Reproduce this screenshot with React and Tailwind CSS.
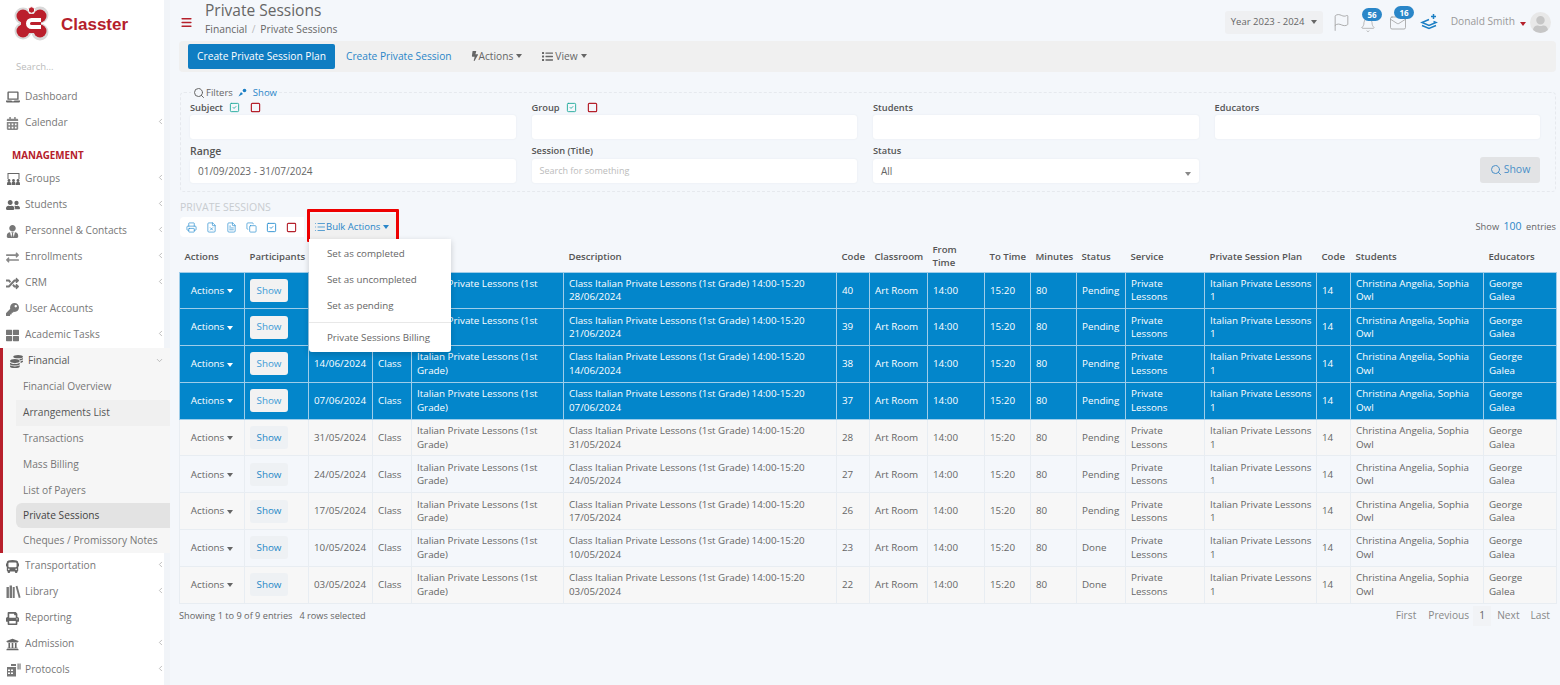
import {
  Bell,
  ChevronDown,
  ChevronLeft,
  Copy,
  FileText,
  FileX,
  Flag,
  List,
  Mail,
  Menu,
  Printer,
  Search,
  Square,
  SquareCheck,
} from "lucide-react";
import {
  FaBolt,
  FaBus,
  FaCalendarAlt,
  FaCoins,
  FaExchangeAlt,
  FaKey,
  FaLaptop,
  FaList,
  FaPrint,
  FaRandom,
  FaThLarge,
  FaUniversity,
  FaUserFriends,
  FaUserTie,
  FaUser,
} from "react-icons/fa";

function GroupsIcon() {
  return (
    <svg width="15" height="14" viewBox="0 0 15 14" fill="#666">
      <path d="M1.5 1h12v6h-1V2h-10v5h-1z" />
      <circle cx="3" cy="8.5" r="1.4" />
      <circle cx="7.5" cy="8.5" r="1.4" />
      <circle cx="12" cy="8.5" r="1.4" />
      <path d="M1 13v-1.5a2 2 0 0 1 4 0V13zM5.5 13v-1.5a2 2 0 0 1 4 0V13zM10 13v-1.5a2 2 0 0 1 4 0V13z" />
    </svg>
  );
}

function LibraryIcon() {
  return (
    <svg width="15" height="14" viewBox="0 0 15 14" fill="#777">
      <rect x="0.5" y="2" width="2.4" height="11" />
      <rect x="3.6" y="0.5" width="2.4" height="12.5" />
      <rect x="6.7" y="2" width="2" height="11" />
      <path d="M9.6 1.2l1.8-.5 3.2 11.8-1.8.5z" />
    </svg>
  );
}

function ProtocolsIcon() {
  return (
    <svg width="15" height="14" viewBox="0 0 15 14" fill="#777">
      <path d="M1 4h9v9.5H1zM2 6.5v1.6h2V6.5zm3 0v1.6h2V6.5zm-3 3v1.6h2V9.5zm3 0v1.6h2V9.5z" fillRule="evenodd" />
      <rect x="11.5" y="0.5" width="1.2" height="6" />
      <rect x="13.4" y="0.5" width="1.2" height="6" />
      <rect x="5" y="1" width="5" height="2" />
    </svg>
  );
}

const topItems = [
  { label: "Dashboard", icon: <FaLaptop size={14} /> },
  { label: "Calendar", icon: <FaCalendarAlt size={13} className="text-[#888]" />, arrow: true },
];

const managementItems = [
  { label: "Groups", icon: <GroupsIcon />, arrow: true },
  { label: "Students", icon: <FaUserFriends size={14} />, arrow: true },
  { label: "Personnel & Contacts", icon: <FaUserTie size={13} className="text-[#777]" />, arrow: true },
  { label: "Enrollments", icon: <FaExchangeAlt size={13} className="text-[#888]" />, arrow: true },
  { label: "CRM", icon: <FaRandom size={13} className="text-[#777]" />, arrow: true },
  { label: "User Accounts", icon: <FaKey size={13} className="text-[#777]" /> },
  { label: "Academic Tasks", icon: <FaThLarge size={13} className="text-[#777]" />, arrow: true },
];

const bottomItems = [
  { label: "Transportation", icon: <FaBus size={13} />, arrow: true },
  { label: "Library", icon: <LibraryIcon />, arrow: true },
  { label: "Reporting", icon: <FaPrint size={13} /> },
  { label: "Admission", icon: <FaUniversity size={13} />, arrow: true },
  { label: "Protocols", icon: <ProtocolsIcon />, arrow: true },
];

const financialLinks = [
  { label: "Financial Overview", h: "h-[26px]" },
  { label: "Arrangements List", h: "h-[26px]", tone: "bg-[#f0f0f0] text-[#555]" },
  { label: "Transactions", h: "h-[26px]" },
  { label: "Mass Billing", h: "h-[26px]" },
  { label: "List of Payers", h: "h-[25px]" },
  { label: "Private Sessions", h: "h-[25px]", tone: "bg-[#e3e3e3] text-[#444] rounded-l-md" },
  { label: "Cheques / Promissory Notes", h: "h-[25px]" },
];

const columns = [
  { label: "Actions", w: "w-[65px]" },
  { label: "Participants", w: "w-[64px]" },
  { label: "Date", w: "w-[64px]" },
  { label: "Type", w: "w-[39px]" },
  { label: "Title", w: "w-[152px]" },
  { label: "Description", w: "w-[273px]" },
  { label: "Code", w: "w-[33px]" },
  { label: "Classroom", w: "w-[58px]" },
  { label: "From Time", w: "w-[57px]" },
  { label: "To Time", w: "w-[46px]", nowrap: true },
  { label: "Minutes", w: "w-[46px]" },
  { label: "Status", w: "w-[49px]" },
  { label: "Service", w: "w-[79px]" },
  { label: "Private Session Plan", w: "w-[112px]" },
  { label: "Code", w: "w-[34px]" },
  { label: "Students", w: "w-[133px]" },
  { label: "Educators", w: "w-[73px]" },
];

const rows = [
  { date: "28/06/2024", code: 40, status: "Pending", selected: true },
  { date: "21/06/2024", code: 39, status: "Pending", selected: true },
  { date: "14/06/2024", code: 38, status: "Pending", selected: true },
  { date: "07/06/2024", code: 37, status: "Pending", selected: true },
  { date: "31/05/2024", code: 28, status: "Pending" },
  { date: "24/05/2024", code: 27, status: "Pending" },
  { date: "17/05/2024", code: 26, status: "Pending" },
  { date: "10/05/2024", code: 23, status: "Done" },
  { date: "03/05/2024", code: 22, status: "Done" },
];

function Caret() {
  return (
    <span className="ml-[3px] inline-block h-0 w-0 border-x-[3px] border-t-[4px] border-x-transparent border-t-current align-middle" />
  );
}

function Logo() {
  return (
    <svg width="36" height="38" viewBox="0 0 36 38" className="shrink-0">
      <g fill="#d9d9d9">
        <circle cx="9" cy="12" r="8.5" />
        <circle cx="26" cy="11" r="8.5" />
        <circle cx="9" cy="27" r="8.5" />
        <circle cx="26" cy="28" r="8.5" />
        <rect x="9" y="8" width="17" height="22" />
      </g>
      <g fill="#bb1f2c">
        <circle cx="9" cy="12" r="6.5" />
        <circle cx="26" cy="12" r="6.5" />
        <circle cx="9" cy="27" r="6.5" />
        <circle cx="26" cy="27" r="6.5" />
        <rect x="7" y="10" width="20" height="19" />
      </g>
      <path d="M27 16H17.5a3.5 3.5 0 0 0 0 7H27" fill="none" stroke="#fff" strokeWidth="4" />
      <circle cx="17.5" cy="6" r="3.2" fill="#bb1f2c" stroke="#fff" strokeWidth="1" />
    </svg>
  );
}

function NavRow({ item }) {
  return (
    <div className="mr-[6px] flex h-[26px] items-center bg-white pl-[6px] text-[10.2px] text-[#777]">
      <span className="flex w-[19px] shrink-0 text-[#666]">{item.icon}</span>
      <span className="flex-1 truncate">{item.label}</span>
      {item.arrow && <ChevronLeft size={9} className="-mr-[1px] -mt-[4px] text-[#aaa]" />}
    </div>
  );
}

function Sidebar() {
  return (
    <aside className="flex h-[685px] w-[170px] shrink-0 flex-col overflow-hidden bg-[#f1f4f8]">
      <div className="mr-[6px] flex h-[56px] items-start bg-white pl-[14px] pt-[4px]">
        <Logo />
        <span className="ml-[11px] mt-[11px] font-['Liberation_Sans',sans-serif] text-[17px] font-bold leading-[20px] text-[#b5202b]">
          Classter
        </span>
      </div>
      <div className="mr-[6px] flex h-[28px] items-start bg-white pl-[16px] pt-[4px] text-[9.5px] leading-[14px] text-[#bbb]">
        Search...
      </div>
      {topItems.map((item) => (
        <NavRow key={item.label} item={item} />
      ))}
      <div className="mr-[6px] flex h-[30px] items-end bg-white pb-[3px] pl-[12px] text-[9.8px] font-bold leading-[14px] text-[#b5202b]">
        MANAGEMENT
      </div>
      {managementItems.map((item) => (
        <NavRow key={item.label} item={item} />
      ))}
      <div className="border-l-[3px] border-[#b8202c] bg-[#f6f6f6]">
        <div className="flex h-[26px] items-center pl-[7px] pr-[6px] text-[10.2px] text-[#555]">
          <span className="flex w-[18px] shrink-0 text-[#666]">
            <FaCoins size={13} />
          </span>
          <span className="flex-1">Financial</span>
          <ChevronDown size={9} className="-mt-[2px] text-[#aaa]" />
        </div>
        {financialLinks.map((link) => (
          <div key={link.label} className={`${link.h} ml-[13px] flex items-center pl-[7px] text-[10.2px] ${link.tone || "text-[#777]"}`}>
            {link.label}
          </div>
        ))}
      </div>
      {bottomItems.map((item) => (
        <NavRow key={item.label} item={item} />
      ))}
      <div className="mr-[6px] flex-1 bg-white" />
    </aside>
  );
}

function TopBar() {
  return (
    <header className="flex h-[41px] items-start">
      <Menu size={13} strokeWidth={3} className="ml-[1px] mt-[16px] text-[#b5202b]" />
      <div className="ml-[12px]">
        <h1 className="text-[15.5px] leading-[20px] text-[#666]">Private Sessions</h1>
        <div className="text-[10.3px] leading-[18px] text-[#666]">
          Financial <span className="mx-[2px] text-[#bbb]">/</span> Private Sessions
        </div>
      </div>
      <div className="ml-auto mr-[5px] flex items-center pt-[10px]">
        <div className="flex h-[23px] w-[98px] items-center justify-center rounded-[3px] bg-[#eff0f2] text-[9.5px] text-[#666]">
          Year 2023 - 2024
          <span className="ml-[3px]"><Caret /></span>
        </div>
        <Flag size={19} strokeWidth={1} className="ml-[9px] text-[#999]" />
        <div className="relative ml-[9px] mt-[5px]">
          <Bell size={16} strokeWidth={1} className="text-[#999]" />
          <span className="absolute -right-[6px] -top-[9px] rounded-full bg-[#2a86c8] px-[5px] text-[8px] font-bold leading-[13px] text-white">56</span>
        </div>
        <div className="relative ml-[13px] mt-[2px]">
          <Mail size={18} strokeWidth={1} className="text-[#999]" />
          <span className="absolute -right-[7px] -top-[8px] rounded-full bg-[#2a86c8] px-[5px] text-[8px] font-bold leading-[13px] text-white">16</span>
        </div>
        <svg width="18" height="18" viewBox="0 0 18 18" fill="none" stroke="#1b7fc4" strokeWidth="1.5" className="ml-[13px]">
          <path d="M9 6.5 2 9.5l7 3 7-3-2.5-1" />
          <path d="M2 12.5l7 3 7-3" />
          <path d="M13.5 1v5M11 3.5h5" />
        </svg>
        <span className="ml-[13px] text-[10.2px] text-[#999]">Donald Smith</span>
        <span className="ml-[2px] text-[#b5202b]"><Caret /></span>
        <span className="ml-[4px] flex h-[21px] w-[21px] items-end justify-center overflow-hidden rounded-full bg-[#e8e8e8] text-[#c6c6c6]">
          <FaUser size={17} />
        </span>
      </div>
    </header>
  );
}

function ActionBar() {
  return (
    <div className="flex h-[31px] items-center rounded-[4px] bg-[#f0f0f0] pl-[9px] text-[10.2px]">
      <button className="h-[25px] w-[147px] rounded-[2px] bg-[#0f7dc2] text-white">Create Private Session Plan</button>
      <span className="ml-[11px] text-[#2a86c8]">Create Private Session</span>
      <span className="ml-[18px] flex items-center text-[#666]">
        <FaBolt size={10} className="-mr-[1px]" />
        Actions
        <Caret />
      </span>
      <span className="ml-[20px] flex items-center text-[#666]">
        <FaList size={11} className="mr-[2px]" />
        View
        <Caret />
      </span>
    </div>
  );
}

function CheckIcons() {
  return (
    <span className="ml-[6px] flex items-center gap-[10px]">
      <SquareCheck size={11} strokeWidth={2} className="text-[#1fa99a]" />
      <Square size={11} strokeWidth={2.6} className="text-[#b5202b]" />
    </span>
  );
}

function Field({ label, big, tall, icons, value, placeholder, select }) {
  return (
    <div>
      <div className={`flex items-center font-semibold leading-[14px] text-[#555] ${tall ? "h-[17px]" : "h-[15px]"} ${big ? "text-[10.5px]" : "text-[9.3px]"}`}>
        {label}
        {icons && <CheckIcons />}
      </div>
      <div className={`flex h-[24px] items-center rounded-[3px] bg-white px-[8px] shadow-[0_0_2px_#e4e8ee] ${placeholder ? "text-[9px] text-[#bbb]" : "text-[10px] text-[#666]"}`}>
        <span className="flex-1">{value || placeholder}</span>
        {select && <span className="mt-[4px] text-[#888]"><Caret /></span>}
      </div>
    </div>
  );
}

function Filters() {
  return (
    <fieldset className="ml-[1px] mt-[14px] h-[106px] w-[1376px] rounded-[4px] border border-dashed border-[#e6e9ee] pl-[9px] pr-[15px]">
      <legend className="ml-[1px] flex items-center px-[2px] text-[9.5px] leading-[13px] text-[#666]">
        <Search size={12} className="mr-[1px]" />
        Filters
        <svg width="9" height="9" viewBox="0 0 9 9" className="ml-[5px] mr-[6px]">
          <path d="M0.5 8.5 3 4l2 2z" fill="#1b7fc4" />
          <circle cx="6.5" cy="2.5" r="1.8" fill="#1b7fc4" />
        </svg>
        <span className="text-[#2a86c8]">Show</span>
      </legend>
      <div className="mt-[1px] grid grid-cols-4 gap-x-[16px] gap-y-[3px]">
        <Field label="Subject" icons />
        <Field label="Group" icons />
        <Field label="Students" />
        <Field label="Educators" />
        <Field label="Range" big tall value="01/09/2023 - 31/07/2024" />
        <Field label="Session (Title)" tall placeholder="Search for something" />
        <Field label="Status" tall value="All" select />
        <div className="flex items-end justify-end">
          <button className="flex h-[26px] w-[60px] items-center justify-center rounded-[3px] bg-[#e2e3e5] text-[10.5px] text-[#4a90c8]">
            <Search size={12} className="mr-[2px]" />
            Show
          </button>
        </div>
      </div>
    </fieldset>
  );
}

function ExportBar() {
  return (
    <div className="relative mt-[1px] flex h-[24px] items-center">
      <div className="ml-[1px] flex h-[20px] w-[124px] items-center gap-[9px] rounded-l-[4px] bg-white pl-[6px] text-[#2a8fd0]">
        <Printer size={11} strokeWidth={1.5} />
        <FileX size={11} strokeWidth={1.5} />
        <FileText size={11} strokeWidth={1.5} />
        <Copy size={11} strokeWidth={1.5} />
        <SquareCheck size={11} strokeWidth={2} />
        <Square size={11} strokeWidth={2.4} className="text-[#b5202b]" />
      </div>
      <div className="relative ml-[5px] flex h-[26px] w-[88px] items-center bg-[#f0f0f0] pl-[5px] text-[9.5px] text-[#2a86c8]">
        <List size={12} strokeWidth={1.5} />
        Bulk Actions
        <Caret />
        <span className="absolute -inset-x-[2px] -bottom-[2px] -top-[5px] rounded-[1px] border-[3px] border-[#ee0000]" />
        <div className="absolute left-0 top-[25px] z-10 flex h-[113px] w-[142px] flex-col rounded-b-[3px] bg-white pl-[18px] pt-[2px] text-[9.75px] text-[#666] shadow-[0_2px_6px_rgba(0,0,0,0.18)]">
          <span className="flex h-[26px] items-center">Set as completed</span>
          <span className="flex h-[26px] items-center">Set as uncompleted</span>
          <span className="flex h-[26px] items-center">Set as pending</span>
          <span className="-ml-[18px] mt-[3px] border-t border-[#e8e8e8] pl-[18px] pt-[8px] leading-[14px]">Private Sessions Billing</span>
        </div>
      </div>
      <div className="ml-auto text-[9.3px] text-[#666]">
        Show <span className="mx-[2px] text-[10.5px] text-[#2a86c8]">100</span> entries
      </div>
    </div>
  );
}

function SessionsTable() {
  return (
    <table className="mt-[2px] w-[1377px] table-fixed border-collapse text-[9.8px] leading-[13.5px]">
      <colgroup>
        {columns.map((col, i) => (
          <col key={i} className={col.w} />
        ))}
      </colgroup>
      <thead>
        <tr className="h-[31px]">
          {columns.map((col, i) => (
            <th key={i} className={`px-[5px] text-left text-[9.6px] font-semibold leading-[13px] text-[#555] ${col.nowrap ? "whitespace-nowrap" : ""}`}>
              {col.label}
            </th>
          ))}
        </tr>
      </thead>
      <tbody>
        {rows.map((row, i) => {
          const cell = row.selected
            ? "border border-[#9fcde9] px-[5px]"
            : "border border-[#e8edf2] px-[5px]";
          const tone = row.selected
            ? "bg-[#0386cb] text-white"
            : i % 2 === 0
              ? "bg-[#f7f7f7] text-[#666]"
              : "bg-[#f4f7fb] text-[#666]";
          return (
            <tr key={row.code} className={`h-[36.8px] ${tone}`}>
              <td className={`${cell} text-center`}>
                Actions
                <Caret />
              </td>
              <td className={cell}>
                <span className={`flex h-[23px] w-[38px] items-center justify-center rounded-[3px] ${row.selected ? "bg-[#f2f2f2] text-[#3b9ad6]" : "bg-[#eef1f4] text-[#1e88c7]"}`}>
                  Show
                </span>
              </td>
              <td className={cell}>{row.date}</td>
              <td className={cell}>Class</td>
              <td className={cell}>Italian Private Lessons (1st Grade)</td>
              <td className={cell}>
                Class Italian Private Lessons (1st Grade) 14:00-15:20
                <br />
                {row.date}
              </td>
              <td className={cell}>{row.code}</td>
              <td className={cell}>Art Room</td>
              <td className={cell}>14:00</td>
              <td className={cell}>15:20</td>
              <td className={cell}>80</td>
              <td className={cell}>{row.status}</td>
              <td className={cell}>Private Lessons</td>
              <td className={`${cell} whitespace-nowrap`}>
                Italian Private Lessons
                <br />1
              </td>
              <td className={cell}>14</td>
              <td className={cell}>Christina Angelia, Sophia Owl</td>
              <td className={cell}>
                George
                <br />
                Galea
              </td>
            </tr>
          );
        })}
      </tbody>
    </table>
  );
}

function TableFooter() {
  return (
    <div className="flex h-[24px] items-center text-[9.2px] text-[#666]">
      <span>Showing 1 to 9 of 9 entries</span>
      <span className="ml-[7px]">4 rows selected</span>
      <div className="ml-auto mr-[6px] flex items-center text-[10.2px] text-[#888]">
        <span>First</span>
        <span className="ml-[12px]">Previous</span>
        <span className="ml-[4px] flex h-[20px] w-[18px] items-center justify-center bg-[#f1f3f6] text-[#666]">1</span>
        <span className="ml-[6px]">Next</span>
        <span className="ml-[11px]">Last</span>
      </div>
    </div>
  );
}

export default function App() {
  return (
    <div className="flex h-[685px] w-[1560px] overflow-hidden bg-[#f4f7fb] font-['Open_Sans',sans-serif]">
      <Sidebar />
      <main className="w-[1390px] pl-[9px] pr-[4px]">
        <TopBar />
        <ActionBar />
        <Filters />
        <div className="ml-[1px] mt-[9px] h-[13px] text-[10.5px] leading-[13px] text-[#c8ccd0]">PRIVATE SESSIONS</div>
        <ExportBar />
        <SessionsTable />
        <TableFooter />
      </main>
    </div>
  );
}
